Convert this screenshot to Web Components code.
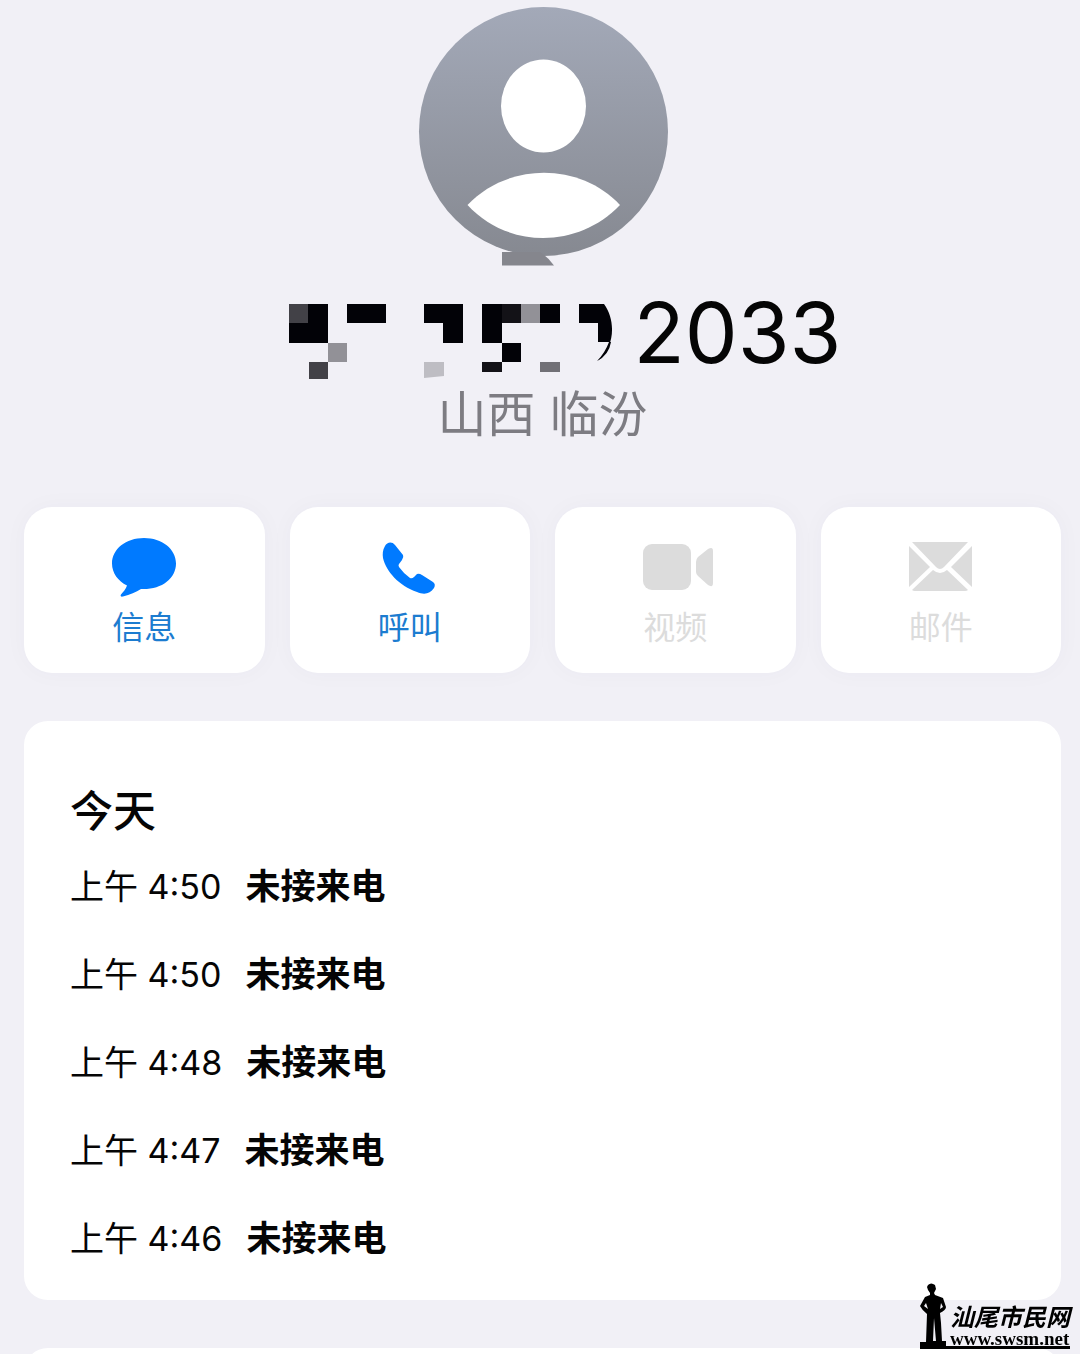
<!DOCTYPE html>
<html lang="zh-CN">
<head>
<meta charset="UTF-8">
<meta name="viewport" content="width=device-width, initial-scale=1">
<title>山西 临汾</title>
<style>
  body {
    margin: 0;
    background-color: #f1f0f6;
    color: #050505;
    font-family: Inter, "Noto Sans CJK SC", sans-serif;
  }
</style>
</head>
<body>
<contact-page>
  <contact-header slot="header" number="2033">山西 临汾</contact-header>
  <contact-action slot="actions" icon="message">信息</contact-action>
  <contact-action slot="actions" icon="phone">呼叫</contact-action>
  <contact-action slot="actions" icon="video" disabled>视频</contact-action>
  <contact-action slot="actions" icon="mail" disabled>邮件</contact-action>
  <call-history day="今天">
    <call-entry time="上午 4:50">未接来电</call-entry>
    <call-entry time="上午 4:50">未接来电</call-entry>
    <call-entry time="上午 4:48">未接来电</call-entry>
    <call-entry time="上午 4:47">未接来电</call-entry>
    <call-entry time="上午 4:46">未接来电</call-entry>
  </call-history>
</contact-page>
<site-mark href="http://www.swsm.net" name="汕尾市民网">www.swsm.net</site-mark>

<script>
  class ContactPage extends HTMLElement {
    constructor() {
      super();
      this.attachShadow({ mode: "open" });
    }
    connectedCallback() {
      this.shadowRoot.innerHTML = `
        <style>
          :host {
            display: block;
            height: 100vh;
            overflow: hidden;
          }
          main {
            display: flex;
            flex-direction: column;
            gap: 48px;
            padding: 7px 19px 0 24px;
          }
          .actions {
            display: grid;
            grid-template-columns: repeat(4, 1fr);
            gap: 25px;
          }
          .next-card {
            height: 120px;
            background-color: #fff;
            border-radius: 24px;
          }
        </style>
        <main>
          <slot name="header"></slot>
          <div class="actions"><slot name="actions"></slot></div>
          <slot></slot>
          <div class="next-card"></div>
        </main>
      `;
    }
  }

  class ContactHeader extends HTMLElement {
    constructor() {
      super();
      this.attachShadow({ mode: "open" });
    }
    connectedCallback() {
      this.shadowRoot.innerHTML = `
        <style>
          :host {
            display: flex;
            flex-direction: column;
            align-items: center;
            padding-bottom: 12px;
          }
          svg {
            display: block;
          }
          h1 {
            display: flex;
            align-items: flex-start;
            margin: 0;
            padding-top: 16px;
            font-size: 84px;
            line-height: 100px;
            font-weight: 400;
          }
          p {
            margin: 0;
            font-size: 49px;
            line-height: 64px;
            color: #7d7c82;
          }
        </style>
        <svg width="250" height="260" viewBox="0 0 250 260" aria-hidden="true">
          <defs>
            <linearGradient id="shade" x1="0" y1="0" x2="0" y2="1">
              <stop offset="0" stop-color="#a3a9b8"/>
              <stop offset="1" stop-color="#868991"/>
            </linearGradient>
          </defs>
          <circle cx="125.500" cy="124.500" r="124.500" fill="url(#shade)"/>
          <ellipse cx="125.500" cy="99" rx="42.500" ry="46.500" fill="#fff"/>
          <path d="M49.500 198 C90 155 162 155 202 198 C160 242 90 242 49.500 198Z" fill="#fff"/>
          <path d="M84 245H122Q130 250 136 258.500H84Z" fill="#85868d"/>
        </svg>
        <h1>
          <svg width="390" height="100" viewBox="-3 0 390 100" role="img" aria-label="隐藏号码">
            <path fill="#020207" d="M42 21h39v39H42zM100 21h39v19h-39zM177 21h39v39h-20V40h-19zM235 21h78v19h-58v20h-20zM255 60h19v19h-19zM332 21h25c12 16 11 43-6 57q10-10 12-19h-12V40h-19z"/>
            <path fill="#424147" d="M42 21h19v19H42zM62 79h19v17H62z"/>
            <path fill="#929197" d="M81 60h19v19H81zM274 21h19v19h-19z"/>
            <path fill="#131217" d="M255 21h19v19h-19zM235 79h20v10h-20z"/>
            <path fill="#bebdc3" d="M177 79h20v14l-20 2z"/>
            <path fill="#717076" d="M293 79h20v10h-20z"/>
            <path fill="#020207" d="M364 59q-2 13-14 19q8-8 12-19z"/>
          </svg>
          <span>${this.getAttribute("number")}</span>
        </h1>
        <p><slot></slot></p>
      `;
    }
  }

  const icons = {
    message: `<path d="M32 2C14 2 0 13 0 27.500C0 37 6 45 15 49.500C14 53 11 56 9 58.500C8 60 9 61 11 60.500C18 59 24 56 29 53C49 54 64 43 64 27.500C64 13 50 2 32 2Z"/>`,
    phone: `<path d="M7 10C9 6 14 5 17 9L25 19Q26 21 24 24L21 28Q20 29 21 31Q26 38 32 42Q34 43 36 41L39 38Q41 37 44 39L55 46Q58 48 56 52C52 58 46 59 39 56C21 50 8 35 5 22Q4 15 7 10Z"/>`,
    video: `<rect x="0" y="8" width="48" height="46" rx="9"/><path d="M53 26Q53 23 55 21L65 13Q70 10 70 15V47Q70 52 65 49L55 40Q53 38 53 36Z"/>`,
    mail: `<path d="M3 6H59L35 31Q31 35 27 31ZM0 10L21 31L0 51ZM63 10V51L42 31ZM24 34Q31 40 38 34L59 54Q58 55 56 55H6Q4 55 3 54Z"/>`
  };

  class ContactAction extends HTMLElement {
    constructor() {
      super();
      this.attachShadow({ mode: "open" });
    }
    connectedCallback() {
      this.shadowRoot.innerHTML = `
        <style>
          :host {
            display: block;
          }
          button {
            display: flex;
            flex-direction: column;
            align-items: center;
            gap: 4px;
            width: 100%;
            padding: 29px 0 21px;
            border: 0;
            border-radius: 28px;
            background-color: #fff;
            box-shadow: 0 0 24px rgba(60, 60, 90, 0.03);
            color: #1c7cd0;
            font-family: inherit;
            font-size: 32px;
            line-height: 48px;
            font-weight: 400;
            cursor: pointer;
          }
          button:disabled {
            color: #dcdcdc;
            cursor: default;
          }
          svg {
            fill: #007aff;
            overflow: visible;
          }
          button:disabled svg {
            fill: #dcdcdc;
          }
        </style>
        <button type="button" ${this.hasAttribute("disabled") ? "disabled" : ""}>
          <svg width="64" height="64" viewBox="0 0 64 64" aria-hidden="true">${icons[this.getAttribute("icon")]}</svg>
          <slot></slot>
        </button>
      `;
    }
  }

  class CallHistory extends HTMLElement {
    constructor() {
      super();
      this.attachShadow({ mode: "open" });
    }
    connectedCallback() {
      this.shadowRoot.innerHTML = `
        <style>
          :host {
            display: block;
            padding: 60px 46px 39px;
            border-radius: 24px;
            background-color: #fff;
          }
          h2 {
            margin: 0 0 23px;
            font-size: 43px;
            line-height: 60px;
            font-weight: 500;
          }
          .list {
            display: flex;
            flex-direction: column;
            gap: 43px;
          }
        </style>
        <h2>${this.getAttribute("day")}</h2>
        <div class="list" role="list"><slot></slot></div>
      `;
    }
  }

  class CallEntry extends HTMLElement {
    constructor() {
      super();
      this.attachShadow({ mode: "open" });
    }
    connectedCallback() {
      this.setAttribute("role", "listitem");
      this.shadowRoot.innerHTML = `
        <style>
          :host {
            display: flex;
            align-items: baseline;
            gap: 24px;
            font-size: 34px;
            line-height: 44px;
          }
          strong {
            font-size: 35px;
            font-weight: 700;
          }
        </style>
        <time>${this.getAttribute("time")}</time>
        <strong><slot></slot></strong>
      `;
    }
  }

  class SiteMark extends HTMLElement {
    constructor() {
      super();
      this.attachShadow({ mode: "open" });
    }
    connectedCallback() {
      this.shadowRoot.innerHTML = `
        <style>
          :host {
            position: fixed;
            right: 10px;
            bottom: 5px;
          }
          a {
            display: flex;
            align-items: flex-end;
            border-bottom: 3px solid #000;
            color: #000;
            text-decoration: none;
          }
          svg {
            display: block;
            overflow: visible;
          }
          .text {
            display: flex;
            flex-direction: column;
          }
          .name {
            font-family: "Noto Sans CJK SC", sans-serif;
            font-size: 24px;
            line-height: 30px;
            font-weight: 700;
            font-style: italic;
          }
          .url {
            font-family: "Liberation Serif", serif;
            font-size: 19px;
            line-height: 15px;
            font-weight: 700;
          }
        </style>
        <a href="${this.getAttribute("href")}">
          <svg width="30" height="63" viewBox="0 0 30 63" aria-hidden="true">
            <path d="M8 2Q11-1 15 2L16 6L14 10L15 12L23 15L26 24Q26 27 20 30L21 40L22 58H26V63H0V59H6L7 31Q2 27 0 23L5 14L10 12V10L8 7L7 4ZM6 20L4 23L8 26ZM21 20L20 26L23 24ZM14 35L13 58H16Z" fill-rule="evenodd"/>
          </svg>
          <span class="text">
            <span class="name">${this.getAttribute("name")}</span>
            <span class="url"><slot></slot></span>
          </span>
        </a>
      `;
    }
  }

  customElements.define("contact-page", ContactPage);
  customElements.define("contact-header", ContactHeader);
  customElements.define("contact-action", ContactAction);
  customElements.define("call-history", CallHistory);
  customElements.define("call-entry", CallEntry);
  customElements.define("site-mark", SiteMark);
</script>
</body>
</html>
